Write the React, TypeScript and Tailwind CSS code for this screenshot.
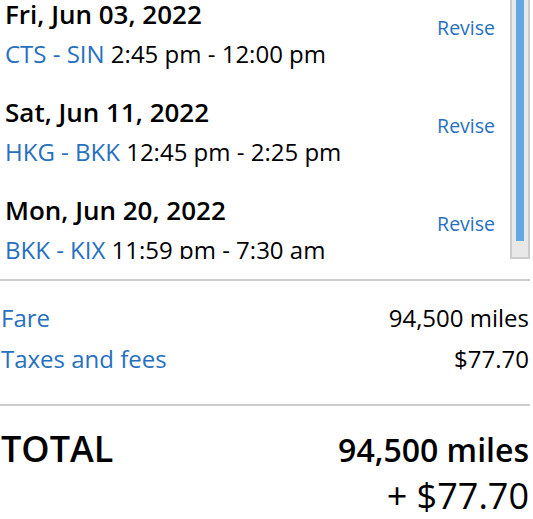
import React from "react";

const flights = [
  { date: "Fri, Jun 03, 2022", route: "CTS - SIN", time: "2:45 pm - 12:00 pm" },
  { date: "Sat, Jun 11, 2022", route: "HKG - BKK", time: "12:45 pm - 2:25 pm" },
  { date: "Mon, Jun 20, 2022", route: "BKK - KIX", time: "11:59 pm - 7:30 am" },
];

export default function App() {
  return (
    <div
      className="w-[530px] bg-white text-black"
      style={{ fontFamily: '"Open Sans", "Noto Sans", sans-serif' }}
    >
      <div className="flex h-[259px]">
        <div className="flex-1 overflow-hidden">
          <div className="mt-[-5px] flex flex-col">
            {flights.map((f) => (
              <div key={f.date} className="flex h-[98px] justify-between pl-[5px] pr-[15px]">
                <div className="flex flex-col">
                  <div className="text-[26px] font-semibold leading-[39px] whitespace-nowrap">{f.date}</div>
                  <div className="text-[24px] leading-[39px] whitespace-nowrap">
                    <span className="text-[#2770c0]">{f.route}</span> {f.time}
                  </div>
                </div>
                <div className="mt-[20px] text-[19.5px] leading-[26px] text-[#2770c0]">Revise</div>
              </div>
            ))}
          </div>
        </div>
        <div className="w-[20px] h-[259px] border-x-2 border-b-2 border-[#cccccc] bg-[#e8e8e8]">
          <div className="ml-[4px] w-[8px] h-[241px] bg-[#62a8e5]" />
        </div>
      </div>

      <div className="mt-[20px] h-[2px] bg-[#cccccc]" />

      <div className="pt-[16px] pl-[1px] pr-[1px]">
        <div className="flex justify-between text-[24px] leading-[41px]">
          <span className="text-[#2770c0]">Fare</span>
          <span>94,500 miles</span>
        </div>
        <div className="flex justify-between text-[24px] leading-[41px]">
          <span className="text-[#2770c0]">Taxes and fees</span>
          <span>$77.70</span>
        </div>
      </div>

      <div className="mt-[25px] h-[2px] bg-[#cccccc]" />

      <div className="pt-[19px] pl-[1px] pr-[1px]">
        <div className="flex justify-between items-baseline leading-[48px]">
          <span className="text-[36px] font-semibold">TOTAL</span>
          <span className="text-[32px] font-semibold">94,500 miles</span>
        </div>
        <div className="text-right text-[36px] leading-[43px]">+ $77.70</div>
      </div>
    </div>
  );
}
